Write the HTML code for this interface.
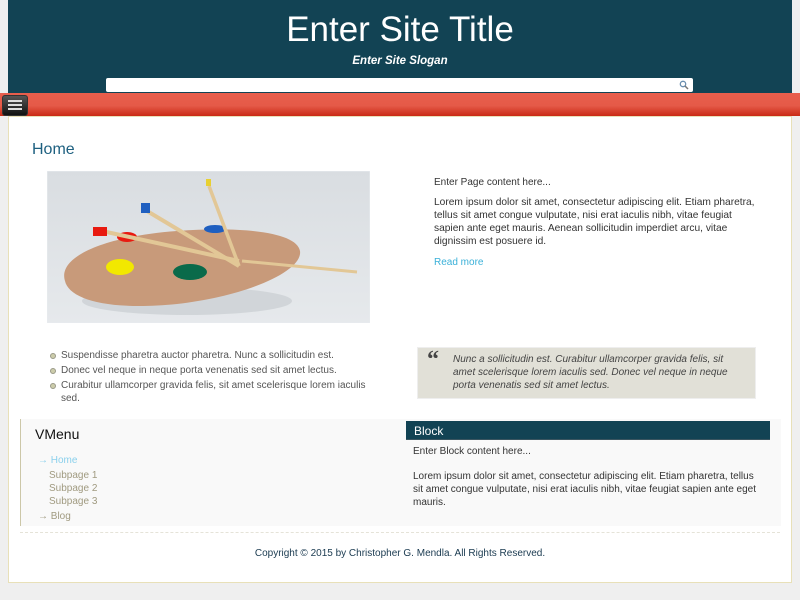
<!DOCTYPE html>
<html><head><meta charset="utf-8"><style>
body{margin:0;background:#efefef;font-family:"Liberation Sans",sans-serif;width:800px;height:600px;position:relative;overflow:hidden}
.a{position:absolute}
#hdr{left:8px;top:0;width:784px;height:93px;background:#124354}
#title{left:0;width:800px;top:10px;text-align:center;color:#fff;font-size:35px}
#slogan{left:0;width:800px;top:55px;text-align:center;color:#fff;font-size:11.5px;font-style:italic;font-weight:bold}
#search{left:106px;top:78px;width:587px;height:14px;background:#fff;border-radius:2px}
#bar{left:0;top:93px;width:800px;height:23px;background:linear-gradient(#e85e4c 0,#e55a48 55%,#c92a16 100%)}
#menu{left:2px;top:95px;width:24px;height:19px;background:linear-gradient(#555,#111);border-radius:3px;border:1px solid #333}
#box{left:8px;top:116px;width:782px;height:465px;background:#fff;border:1px solid #e8e0b8}
.t{font-size:10px;color:#333;line-height:13px}
.b{width:4px;height:4px;border:1px solid #998;border-radius:50%;background:#cca;left:50px}
</style></head><body>
<div id="hdr" class="a"></div>
<div id="title" class="a">Enter Site Title</div>
<div id="slogan" class="a">Enter Site Slogan</div>
<div id="search" class="a"><svg class="a" style="left:573px;top:2px" width="10" height="10"><circle cx="4" cy="4" r="2.7" fill="none" stroke="#6a8fb0" stroke-width="1.3"/><line x1="6" y1="6" x2="9" y2="9" stroke="#777" stroke-width="1.5"/></svg></div>
<div id="bar" class="a"></div>
<div id="menu" class="a"><div class="a" style="left:5px;top:4px;width:14px;height:2px;background:#ddd;box-shadow:0 4px 0 #ddd,0 8px 0 #ddd"></div></div>
<div id="box" class="a"></div>
<div class="a" style="left:32px;top:141px;font-size:16px;color:#1e6080">Home</div>
<svg class="a" style="left:47px;top:171px" width="323" height="152">
<defs><linearGradient id="g" x1="0" y1="0" x2="0" y2="1"><stop offset="0" stop-color="#d9dde1"/><stop offset="1" stop-color="#e6e9ec"/></linearGradient></defs>
<rect width="323" height="152" fill="url(#g)" stroke="#e8ecef"/>
<ellipse cx="140" cy="130" rx="105" ry="14" fill="#c9cdd1" opacity=".7"/>
<path d="M18 110 C10 85 60 65 130 60 C200 55 250 62 253 80 C256 100 200 125 130 133 C60 140 22 128 18 110Z" fill="#c89a7a"/>
<ellipse cx="73" cy="96" rx="14" ry="8" fill="#f2e800"/>
<ellipse cx="143" cy="101" rx="17" ry="8" fill="#0a6a4a"/>
<ellipse cx="168" cy="58" rx="11" ry="4" fill="#1f5fc0"/>
<ellipse cx="80" cy="66" rx="10" ry="5" fill="#e81a10"/>
<line x1="55" y1="60" x2="192" y2="90" stroke="#e2c796" stroke-width="4"/>
<line x1="100" y1="40" x2="192" y2="95" stroke="#e2c796" stroke-width="4"/>
<line x1="162" y1="15" x2="192" y2="95" stroke="#e2c796" stroke-width="3.5"/>
<line x1="195" y1="90" x2="310" y2="101" stroke="#e2c796" stroke-width="3"/>
<rect x="46" y="56" width="14" height="9" fill="#e81a10"/>
<rect x="94" y="32" width="9" height="10" fill="#1f5fc0"/>
<rect x="159" y="8" width="5" height="7" fill="#e8d030"/>
</svg>
<div class="a t" style="left:434px;top:176px">Enter Page content here...</div>
<div class="a t" style="left:434px;top:196px;width:325px;font-size:10.2px">Lorem ipsum dolor sit amet, consectetur adipiscing elit. Etiam pharetra, tellus sit amet congue vulputate, nisi erat iaculis nibh, vitae feugiat sapien ante eget mauris. Aenean sollicitudin imperdiet arcu, vitae dignissim est posuere id.</div>
<div class="a t" style="left:434px;top:256px;color:#3ab0d8">Read more</div>
<div class="a t" style="left:61px;top:349px;width:315px;color:#555">
<div style="margin-bottom:2px">Suspendisse pharetra auctor pharetra. Nunc a sollicitudin est.</div>
<div style="margin-bottom:2px">Donec vel neque in neque porta venenatis sed sit amet lectus.</div>
<div>Curabitur ullamcorper gravida felis, sit amet scelerisque lorem iaculis sed.</div></div>
<div class="a b" style="top:353px"></div><div class="a b" style="top:368px"></div><div class="a b" style="top:383px"></div>
<div class="a" style="left:417px;top:347px;width:337px;height:50px;background:#e1e0d7;border:1px solid #eee"></div>
<div class="a" style="left:427px;top:347px;font-size:24px;font-weight:bold;color:#444;font-family:'Liberation Serif',serif">“</div>
<div class="a t" style="left:453px;top:353px;width:285px;font-style:italic;color:#444">Nunc a sollicitudin est. Curabitur ullamcorper gravida felis, sit amet scelerisque lorem iaculis sed. Donec vel neque in neque porta venenatis sed sit amet lectus.</div>
<div class="a" style="left:20px;top:419px;width:760px;height:107px;background:#f9f9f9;border-left:1px solid #ccc7a8"></div>
<div class="a" style="left:35px;top:426px;font-size:14px;color:#111">VMenu</div>
<div class="a" style="left:38px;top:455px;font-size:10px;color:#8ad0ec">→ Home</div>
<div class="a" style="left:49px;top:469px;font-size:10px;color:#a09a80;line-height:13px">Subpage 1<br>Subpage 2<br>Subpage 3</div>
<div class="a" style="left:38px;top:511px;font-size:10px;color:#a09a80">→ Blog</div>
<div class="a" style="left:406px;top:421px;width:364px;height:19px;background:#124354;border-bottom:1px solid #3a5560;color:#fff;font-size:12px;line-height:20px;padding-left:8px;box-sizing:border-box">Block</div>
<div class="a t" style="left:413px;top:445px">Enter Block content here...</div>
<div class="a t" style="left:413px;top:470px;width:350px">Lorem ipsum dolor sit amet, consectetur adipiscing elit. Etiam pharetra, tellus sit amet congue vulputate, nisi erat iaculis nibh, vitae feugiat sapien ante eget mauris.</div>
<div class="a" style="left:20px;top:532px;width:760px;border-top:1px dashed #e5e3d8"></div>
<div class="a t" style="left:0;width:800px;top:547px;text-align:center;color:#1a3a50">Copyright © 2015 by Christopher G. Mendla. All Rights Reserved.</div>
</body></html>
